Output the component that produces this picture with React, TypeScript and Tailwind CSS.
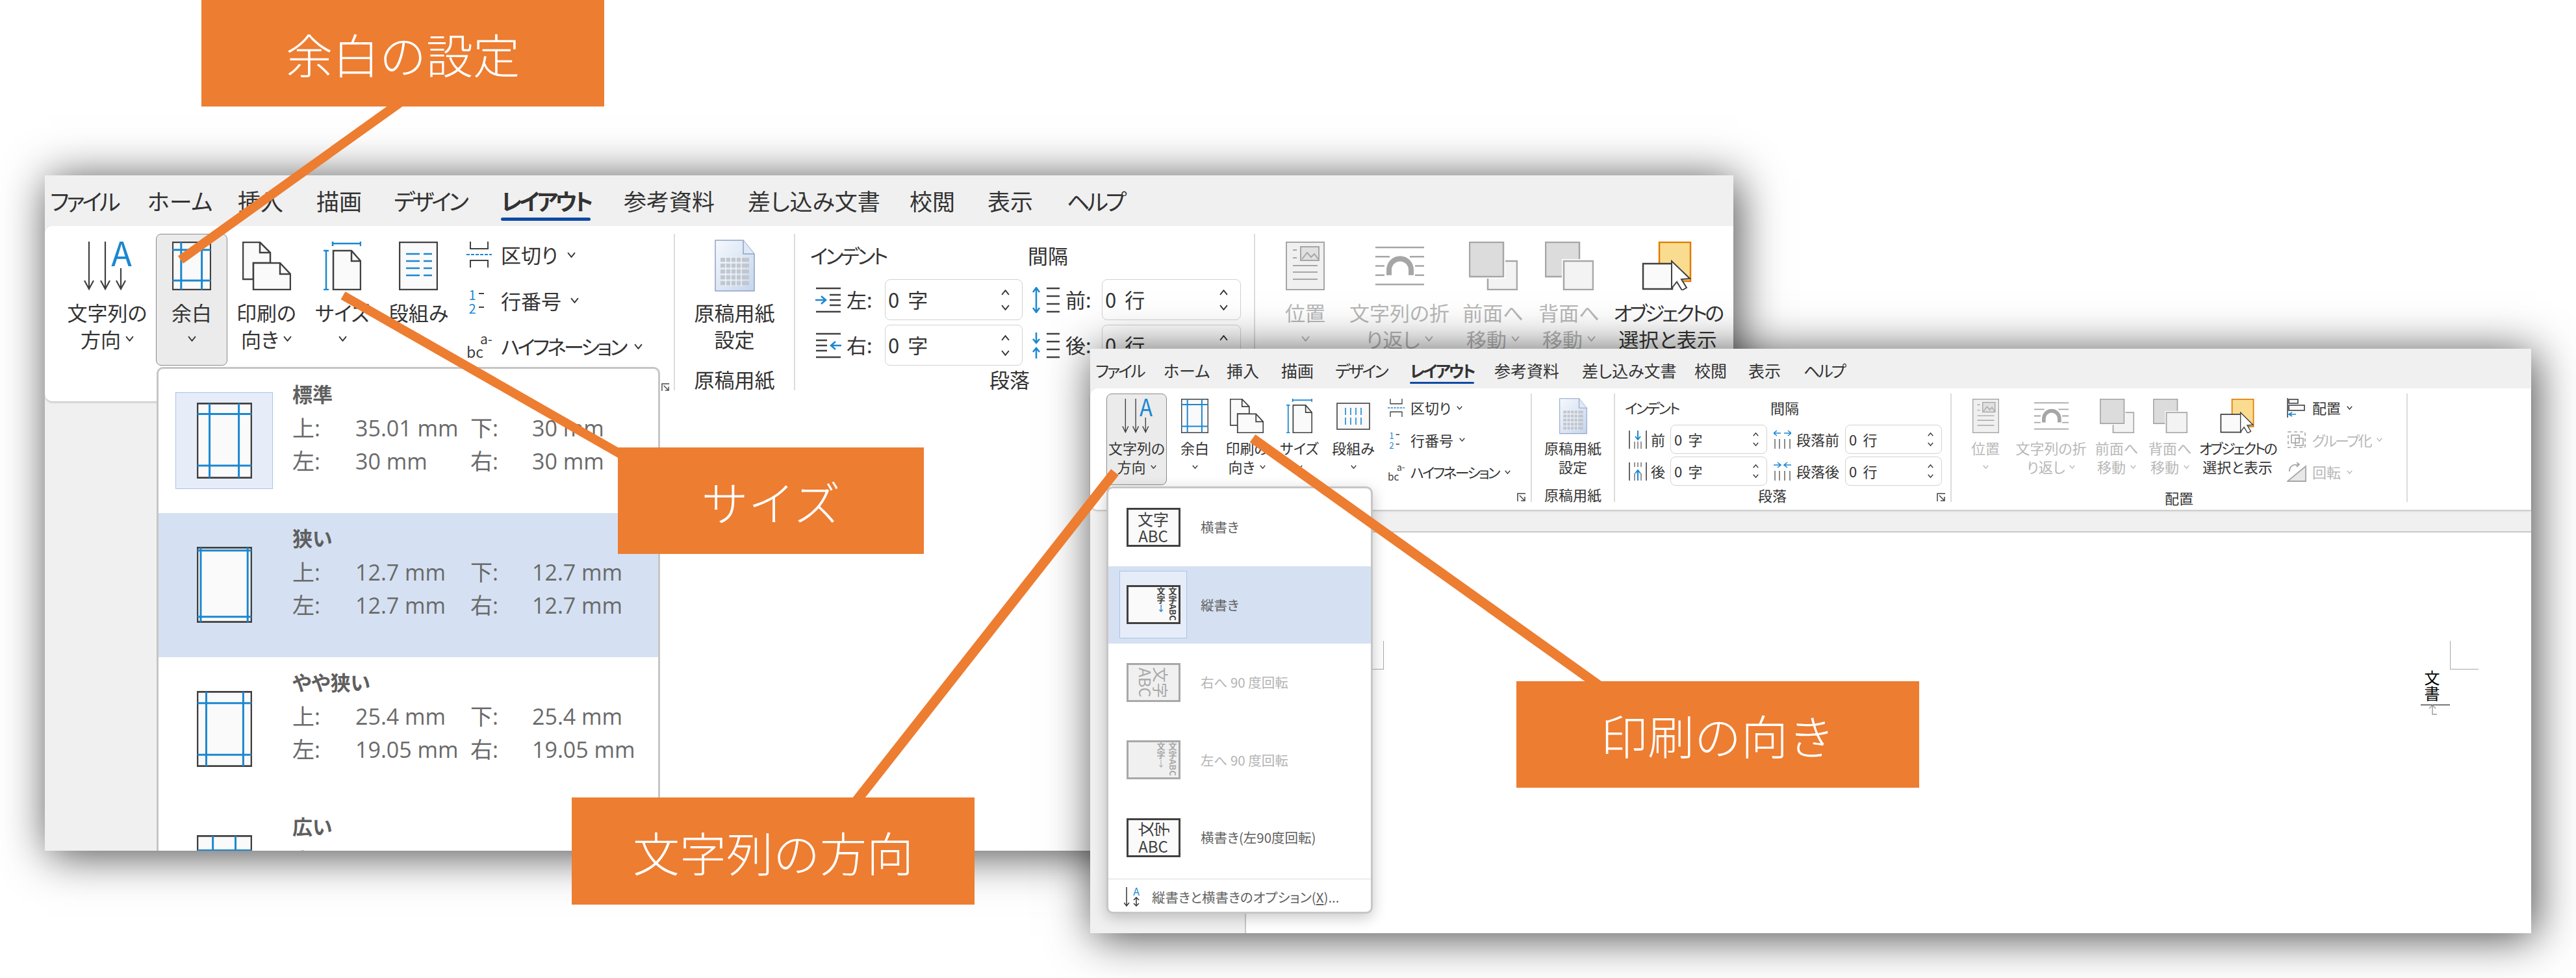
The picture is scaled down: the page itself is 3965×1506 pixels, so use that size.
import React from "react";

const BLUE = "#1b87d0";
const INK = "#404040";
const GREY = "#a6a6a6";

const tight = (s: string) => (/[ァ-ヶ]{2}/.test(s) && s !== "サイズ" ? "tracking-[-0.12em]" : "");

function Chev({ big, up }: { big?: boolean; up?: boolean }) {
  return (
    <svg viewBox="0 0 12 8" preserveAspectRatio="none" className={`shrink-0 ${big ? "w-[13px] h-[9px]" : "w-[9px] h-[6px]"}`} fill="none">
      <polyline points={up ? "1,7 6,1 11,7" : "1,1 6,7 11,1"} stroke="currentColor" strokeWidth="1.7" />
    </svg>
  );
}

function Launcher({ cls }: { cls: string }) {
  return (
    <svg viewBox="0 0 14 14" className={cls} fill="none" stroke="#444" strokeWidth="1.5">
      <path d="M13 1H1V13" />
      <path d="M4 4L12 12M12 6V12H6" />
    </svg>
  );
}

function DirIcon({ cls }: { cls: string }) {
  return (
    <svg viewBox="0 0 76 75" preserveAspectRatio="none" className={cls} fill="none" stroke={INK} strokeWidth="2.2">
      <path d="M10 0V73M3 60L10 73L17 60M35 0V73M28 60L35 73L42 60M59 41V73M52 60L59 73L66 60" />
      <text x="60" y="38" fontSize="52" textAnchor="middle" fill={BLUE} stroke="none">A</text>
    </svg>
  );
}

function OptIcon({ cls }: { cls: string }) {
  return (
    <svg viewBox="0 0 25 30" className={cls} fill="none" stroke={INK} strokeWidth="1.6">
      <path d="M4 0V29M0 24L4 29L8 24M19 16V29M15 20L19 16L23 20M15 25L19 29L23 25" />
      <text x="19" y="13" fontSize="16" textAnchor="middle" fill={BLUE} stroke="none">A</text>
    </svg>
  );
}

function MarginIcon({ cls, v, h, sw = 3 }: { cls: string; v: [number, number]; h: [number, number]; sw?: number }) {
  const line = { vectorEffect: "non-scaling-stroke" as const };
  return (
    <svg viewBox="0 0 100 100" preserveAspectRatio="none" className={cls} fill="none">
      <rect x="1" y="1" width="98" height="98" fill="#fafafa" stroke={INK} strokeWidth={sw} {...line} />
      <g stroke={BLUE} strokeWidth={sw}>
        <line x1={v[0]} x2={v[0]} y1="1" y2="99" {...line} />
        <line x1={v[1]} x2={v[1]} y1="1" y2="99" {...line} />
        <line y1={h[0]} y2={h[0]} x1="1" x2="99" {...line} />
        <line y1={h[1]} y2={h[1]} x1="1" x2="99" {...line} />
      </g>
    </svg>
  );
}

function PagesIcon({ cls }: { cls: string }) {
  return (
    <svg viewBox="0 0 75 75" preserveAspectRatio="none" className={cls} fill="none" stroke={INK} strokeWidth="2.5">
      <path d="M17 58H1V1H27L43 17V33H17Z" fill="#fafafa" />
      <path d="M27 1V17H43" />
      <path d="M17 33H58L74 50V74H17Z" fill="#fafafa" />
      <path d="M58 33V50H74" />
    </svg>
  );
}

function SizeIcon({ cls }: { cls: string }) {
  return (
    <svg viewBox="0 0 58 75" preserveAspectRatio="none" className={cls} fill="none" strokeWidth="2.5">
      <path d="M15 14H43L57 30V74H15Z" fill="#fafafa" stroke={INK} />
      <path d="M43 14V30H57" stroke={INK} />
      <path d="M14 3H57M14 0V7M57 0V7M4 14V74M0 14H8M0 74H8" stroke={BLUE} />
    </svg>
  );
}

function ColsBig({ cls }: { cls: string }) {
  return (
    <svg viewBox="0 0 60 75" preserveAspectRatio="none" className={cls} fill="none" strokeWidth="2.5">
      <rect x="1" y="1" width="58" height="73" fill="#fafafa" stroke={INK} />
      <path d="M11 19H32M38 19H51M11 30H32M38 30H51M11 41H32M38 41H51M11 52H32M38 52H51" stroke={BLUE} />
    </svg>
  );
}

function ColsSmall({ cls }: { cls: string }) {
  return (
    <svg viewBox="0 0 52 42" className={cls} fill="none" strokeWidth="1.6">
      <rect x="1" y="1" width="50" height="40" fill="#fafafa" stroke={INK} />
      <path d="M14 8V19M14 23V34M22 8V19M22 23V34M30 8V19M30 23V34M38 8V19M38 23V34" stroke={BLUE} />
    </svg>
  );
}

function BreakIcon({ cls }: { cls: string }) {
  return (
    <svg viewBox="0 0 39 40" preserveAspectRatio="none" className={cls} fill="none" strokeWidth="2">
      <path d="M6 0V11H33V0M6 40V29H33V40" stroke={INK} />
      <path d="M0 20H39" stroke={BLUE} strokeDasharray="5 2" />
    </svg>
  );
}

function LineNumIcon({ cls }: { cls: string }) {
  return (
    <svg viewBox="0 0 39 40" preserveAspectRatio="none" className={cls}>
      <text x="9" y="19" fontSize="20" textAnchor="middle" fill={BLUE}>1</text>
      <text x="9" y="40" fontSize="20" textAnchor="middle" fill={BLUE}>2</text>
      <path d="M19 9H27M19 30H27" stroke={INK} strokeWidth="2" />
    </svg>
  );
}

function HyphIcon({ cls }: { cls: string }) {
  return (
    <svg viewBox="0 0 39 40" preserveAspectRatio="none" className={cls}>
      <text x="21" y="17" fontSize="21" fill={INK}>a-</text>
      <text x="0" y="38" fontSize="23" fill={INK}>bc</text>
    </svg>
  );
}

function SheetIcon({ cls, id }: { cls: string; id: string }) {
  return (
    <svg viewBox="0 0 62 81" preserveAspectRatio="none" className={cls} fill="none">
      <defs>
        <linearGradient id={id} x1="0" y1="0" x2="1" y2="1">
          <stop offset="0" stopColor="#f6f9fd" />
          <stop offset="1" stopColor="#c6d5ec" />
        </linearGradient>
      </defs>
      <path d="M1 1H44L61 22V79H1Z" fill={`url(#${id})`} stroke="#8ea3c6" strokeWidth="1.5" />
      <path d="M44 1V22H61" fill="#dfe8f5" stroke="#8ea3c6" strokeWidth="1.5" />
      {[28, 37, 46, 55, 64].map((y) => (
        <rect key={y} x="9" y={y} width="44" height="6" fill="#c2c7ce" />
      ))}
      {[17, 25, 33, 41].map((x) => (
        <line key={x} x1={x} x2={x} y1="26" y2="72" stroke="#f1f4f8" strokeWidth="1.5" />
      ))}
    </svg>
  );
}

function PosIcon({ cls }: { cls: string }) {
  return (
    <svg viewBox="0 0 60 75" preserveAspectRatio="none" className={cls} fill="none" stroke={GREY} strokeWidth="2">
      <rect x="1" y="1" width="58" height="73" fill="#f0f0f0" />
      <rect x="23" y="8" width="28" height="21" fill="#e0e0e0" />
      <path d="M25 27L33 17L39 24L44 19L50 27" />
      <path d="M11 13H17M11 25H17M11 37H49M11 47H49M11 58H49" />
    </svg>
  );
}

function WrapIcon({ cls }: { cls: string }) {
  return (
    <svg viewBox="0 0 75 60" preserveAspectRatio="none" className={cls} fill="none" stroke={GREY} strokeWidth="2.5">
      <path d="M0 2H75M0 16H22M53 16H75M0 30H14M61 30H75M0 44H14M61 44H75M0 58H75" />
      <path d="M21 44V36A17 17 0 0 1 55 36V44" strokeWidth="8" />
    </svg>
  );
}

function OrderIcon({ cls, front }: { cls: string; front?: boolean }) {
  const big = <rect x="1" y="1" width="52" height="53" fill="#dcdcdc" stroke={GREY} strokeWidth="2.5" />;
  const small = <rect x="29" y="30" width="45" height="44" fill="#f3f3f3" stroke={GREY} strokeWidth="2.5" />;
  return (
    <svg viewBox="0 0 75 75" preserveAspectRatio="none" className={cls} fill="none">
      {front ? small : big}
      {front ? <rect x="0" y="0" width="56" height="57" fill="#fff" /> : <rect x="26" y="27" width="51" height="50" fill="#fff" />}
      {front ? big : small}
    </svg>
  );
}

function ObjIcon({ cls }: { cls: string }) {
  return (
    <svg viewBox="0 0 80 75" preserveAspectRatio="none" className={cls} fill="none">
      <rect x="27" y="1" width="48" height="60" fill="#f9dc8f" stroke="#e07b00" strokeWidth="2.5" />
      <rect x="2" y="34" width="45" height="39" fill="#fafafa" stroke={INK} strokeWidth="2.5" />
      <path d="M46 30L46 72L54 62L62 75L69 71L61 58L74 57Z" fill="#fff" stroke={INK} strokeWidth="2" />
    </svg>
  );
}

function IndentIcon({ cls, side }: { cls: string; side: "l" | "r" }) {
  return (
    <svg viewBox="0 0 40 40" preserveAspectRatio="none" className={cls} fill="none" strokeWidth="2.5">
      <path d="M1 2H39M1 38H39" stroke={INK} />
      {side === "l" ? (
        <>
          <path d="M22 12H39M22 20H39M22 28H39" stroke={INK} />
          <path d="M0 20H15M9 14L16 20L9 26" stroke={BLUE} />
        </>
      ) : (
        <>
          <path d="M1 12H18M1 20H18M1 28H18" stroke={INK} />
          <path d="M40 20H25M31 14L24 20L31 26" stroke={BLUE} />
        </>
      )}
    </svg>
  );
}

function SpaceIcon({ cls, after }: { cls: string; after?: boolean }) {
  return (
    <svg viewBox="0 0 45 40" preserveAspectRatio="none" className={cls} fill="none" strokeWidth="2.5">
      <path d="M24 2H44M24 14H44M24 26H44M24 38H44" stroke={INK} />
      {after ? (
        <path d="M8 0V15M3 10L8 16L13 10M8 40V25M3 30L8 24L13 30" stroke={BLUE} />
      ) : (
        <path d="M8 2V38M3 8L8 1L13 8M3 32L8 39L13 32" stroke={BLUE} />
      )}
    </svg>
  );
}

function ColIndentIcon({ cls, after }: { cls: string; after?: boolean }) {
  return (
    <svg viewBox="0 0 28 30" preserveAspectRatio="none" className={cls} fill="none" strokeWidth="1.6">
      <path d="M1 1V29M27 1V29" stroke={INK} />
      <path d="M9 18V29M14 18V29M19 18V29" stroke={INK} strokeWidth="1.1" />
      {after ? (
        <>
          <path d="M9 1V8M14 1V8M19 1V8" stroke={INK} strokeWidth="1.1" />
          <path d="M14 29V14M10 18L14 13L18 18" stroke={BLUE} strokeWidth="2" />
        </>
      ) : (
        <path d="M14 1V14M10 10L14 15L18 10" stroke={BLUE} strokeWidth="2" />
      )}
    </svg>
  );
}

function ParaIcon({ cls, after }: { cls: string; after?: boolean }) {
  return (
    <svg viewBox="0 0 27 30" preserveAspectRatio="none" className={cls} fill="none" strokeWidth="1.6">
      <path d="M2 14V29M9 14V29M17 14V29M25 14V29" stroke={INK} strokeWidth="1.2" />
      {after ? (
        <path d="M0 5H10M6 1L11 5L6 9M27 5H17M21 1L16 5L21 9" stroke={BLUE} />
      ) : (
        <path d="M11 5H1M5 1L0 5L5 9M16 5H26M22 1L27 5L22 9" stroke={BLUE} />
      )}
    </svg>
  );
}

function AlignIcon({ cls }: { cls: string }) {
  return (
    <svg viewBox="0 0 30 30" preserveAspectRatio="none" className={cls} fill="none" strokeWidth="1.6">
      <path d="M1 0V30" stroke={INK} />
      <rect x="3" y="2" width="14" height="6" stroke={INK} fill="#fafafa" />
      <rect x="3" y="11" width="24" height="8" stroke={INK} fill="#fafafa" />
      <path d="M14 25H4M8 22L3 25L8 28" stroke={BLUE} />
    </svg>
  );
}

function GroupIcon({ cls }: { cls: string }) {
  return (
    <svg viewBox="0 0 30 30" preserveAspectRatio="none" className={cls} fill="none" stroke={GREY} strokeWidth="1.6">
      <rect x="2" y="3" width="26" height="24" strokeDasharray="5 4" />
      <rect x="7" y="8" width="12" height="12" />
      <rect x="13" y="13" width="12" height="11" />
    </svg>
  );
}

function RotateIcon({ cls }: { cls: string }) {
  return (
    <svg viewBox="0 0 30 30" preserveAspectRatio="none" className={cls} fill="none" stroke={GREY} strokeWidth="1.8">
      <path d="M1 29L29 29L29 6Z" fill="#e8e8e8" />
      <path d="M4 14A9 9 0 0 1 15 4L19 3M15 0L19 3L15 7" />
    </svg>
  );
}

type ToolProps = {
  big?: boolean;
  w: string;
  icon: React.ReactNode;
  line1: string;
  line2?: string;
  disabled?: boolean;
  selected?: boolean;
  plain?: boolean;
};

function Tool({ big, w, icon, line1, line2, disabled, selected, plain }: ToolProps) {
  return (
    <div
      className={`flex flex-col items-center shrink-0 rounded-[8px] border whitespace-nowrap ${w} ${big ? "h-[203px] pt-[11px]" : "h-[141px] pt-[7px]"} ${selected ? "border-[#8a8a8a] bg-[#ebebeb]" : "border-transparent"} ${disabled ? "text-[#b8b8b8]" : "text-[#333333]"}`}
    >
      <div className={`flex items-center justify-center ${big ? "h-[75px]" : "h-[53px]"}`}>{icon}</div>
      <div className={`${tight(line1)} ${big ? "mt-[13px] text-[31px] leading-[41px]" : "mt-[8px] text-[22px] leading-[29px]"}`}>{line1}</div>
      <div className={`flex items-center gap-[7px] ${big ? "h-[41px] text-[31px] leading-[41px]" : "h-[29px] text-[22px] leading-[29px]"}`}>
        {line2 && <span>{line2}</span>}
        {!plain && <Chev big={big} />}
      </div>
    </div>
  );
}

function StackRow({ big, icon, label, disabled }: { big?: boolean; icon: React.ReactNode; label: string; disabled?: boolean }) {
  return (
    <div
      className={`flex items-center whitespace-nowrap ${big ? "h-[70.5px] gap-[14px] text-[31px]" : "h-[49.5px] gap-[9px] text-[22px]"} ${disabled ? "text-[#b8b8b8]" : "text-[#333333]"}`}
    >
      {icon}
      <span className={tight(label)}>{label}</span>
      <Chev big={big} />
    </div>
  );
}

function Spin({ big, value }: { big?: boolean; value: string }) {
  return (
    <div
      className={`flex items-center justify-between rounded-[8px] border border-[#d2d2d2] bg-white text-[#333333] ${big ? "h-[63px] pl-[4px] pr-[19px] text-[31px]" : "h-[45px] pl-[5px] pr-[12px] text-[22px]"}`}
    >
      <span className="[word-spacing:0.2em]">{value}</span>
      <div className={`flex flex-col ${big ? "gap-[14px]" : "gap-[9px]"}`}>
        <Chev big={big} up />
        <Chev big={big} />
      </div>
    </div>
  );
}

function Tabs({ big }: { big?: boolean }) {
  const tabs = big
    ? [
        ["ファイル", "w-[150px]"],
        ["ホーム", "w-[139px]"],
        ["挿入", "w-[121px]"],
        ["描画", "w-[119px]"],
        ["デザイン", "w-[165px]"],
        ["レイアウト", "w-[189px]"],
        ["参考資料", "w-[191px]"],
        ["差し込み文書", "w-[249px]"],
        ["校閲", "w-[120px]"],
        ["表示", "w-[122px]"],
        ["ヘルプ", "w-[100px]"],
      ]
    : [
        ["ファイル", "w-[105px]"],
        ["ホーム", "w-[97px]"],
        ["挿入", "w-[84px]"],
        ["描画", "w-[83px]"],
        ["デザイン", "w-[115px]"],
        ["レイアウト", "w-[130px]"],
        ["参考資料", "w-[135px]"],
        ["差し込み文書", "w-[173px]"],
        ["校閲", "w-[83px]"],
        ["表示", "w-[85px]"],
        ["ヘルプ", "w-[80px]"],
      ];
  return (
    <div className={`flex pl-[8px] bg-[#f0f0f0] text-[#333333] whitespace-nowrap ${big ? "h-[78px] pt-[19px] text-[35px] leading-[40px]" : "h-[61px] pt-[18px] text-[25px] leading-[30px]"}`}>
      {tabs.map(([label, w]) => (
        <div key={label} className={`${w} ${tight(label)}`}>
          {label === "レイアウト" ? (
            <div className="w-fit font-bold">
              {label}
              <div className={`rounded-full bg-[#0f4aa5] ${big ? "mt-[6px] h-[5px]" : "mt-[3px] h-[3px]"}`} />
            </div>
          ) : (
            label
          )}
        </div>
      ))}
    </div>
  );
}

function BigRibbon() {
  const s = { big: true };
  return (
    <div className="flex h-[270px] pt-[12px] bg-white rounded-l-[12px] shadow-[0_2px_3px_rgba(0,0,0,0.18)]">
      <div className="relative flex w-[970px] h-[241px] pl-[21px] border-r-2 border-[#dcdcdc]">
        <Tool {...s} w="w-[150px]" icon={<DirIcon cls="w-[76px] h-[75px]" />} line1="文字列の" line2="方向" />
        <Tool {...s} selected w="w-[110px]" icon={<MarginIcon cls="w-[60px] h-[75px]" v={[23, 76]} h={[17, 80]} />} line1="余白" />
        <Tool {...s} w="w-[120px]" icon={<PagesIcon cls="w-[75px] h-[75px]" />} line1="印刷の" line2="向き" />
        <Tool {...s} w="w-[114px]" icon={<SizeIcon cls="w-[58px] h-[75px]" />} line1="サイズ" />
        <Tool {...s} w="w-[120px]" icon={<ColsBig cls="w-[60px] h-[75px]" />} line1="段組み" />
        <div className="ml-[14px] -mt-[3px]">
          <StackRow {...s} icon={<BreakIcon cls="w-[39px] h-[40px]" />} label="区切り" />
          <StackRow {...s} icon={<LineNumIcon cls="w-[39px] h-[40px]" />} label="行番号" />
          <StackRow {...s} icon={<HyphIcon cls="w-[39px] h-[40px]" />} label="ハイフネーション" />
        </div>
        <Launcher cls="absolute right-[6px] bottom-[-2px] w-[13px] h-[13px]" />
      </div>
      <div className="flex flex-col items-center w-[185px] h-[241px] border-r-2 border-[#dcdcdc] text-[#333333]">
        <div className="h-[211px]">
          <Tool {...s} plain w="w-[180px]" icon={<SheetIcon id="sheet-big" cls="w-[62px] h-[81px]" />} line1="原稿用紙" line2="設定" />
        </div>
        <div className="text-[31px] leading-[41px]">原稿用紙</div>
      </div>
      <div className="flex flex-col w-[708px] h-[241px] border-r-2 border-[#dcdcdc] text-[#333333] text-[31px]">
        <div className="h-[211px] pt-[12px] pl-[23px]">
          <div className="flex leading-[41px]">
            <span className={`w-[335px] ${tight("インデント")}`}>インデント</span>
            <span>間隔</span>
          </div>
          <div className="mt-[17px] flex flex-col gap-[7px] pl-[8px]">
            <div className="flex items-center">
              <IndentIcon side="l" cls="w-[40px] h-[40px] mr-[8px]" />
              <span className="w-[59px]">左:</span>
              <div className="w-[212px]"><Spin big value="0 字" /></div>
              <SpaceIcon cls="ml-[13px] mr-[8px] w-[45px] h-[40px]" />
              <span className="w-[56px]">前:</span>
              <div className="w-[214px]"><Spin big value="0 行" /></div>
            </div>
            <div className="flex items-center">
              <IndentIcon side="r" cls="w-[40px] h-[40px] mr-[8px]" />
              <span className="w-[59px]">右:</span>
              <div className="w-[212px]"><Spin big value="0 字" /></div>
              <SpaceIcon after cls="ml-[13px] mr-[8px] w-[45px] h-[40px]" />
              <span className="w-[56px]">後:</span>
              <div className="w-[214px]"><Spin big value="0 行" /></div>
            </div>
          </div>
        </div>
        <div className="pr-[46px] text-center leading-[41px]">段落</div>
      </div>
      <div className="flex pl-[26px]">
        <Tool {...s} disabled w="w-[102px]" icon={<PosIcon cls="w-[60px] h-[75px]" />} line1="位置" />
        <Tool {...s} disabled w="w-[188px]" icon={<WrapIcon cls="w-[75px] h-[61px]" />} line1="文字列の折" line2="り返し" />
        <Tool {...s} disabled w="w-[100px]" icon={<OrderIcon front cls="w-[75px] h-[75px]" />} line1="前面へ" line2="移動" />
        <Tool {...s} disabled w="w-[134px]" icon={<OrderIcon cls="w-[75px] h-[75px]" />} line1="背面へ" line2="移動" />
        <Tool {...s} plain w="w-[170px]" icon={<ObjIcon cls="w-[80px] h-[75px]" />} line1="オブジェクトの" line2="選択と表示" />
      </div>
    </div>
  );
}

function SmallRibbon() {
  return (
    <div className="flex h-[187px] pt-[8px] bg-white rounded-l-[12px] shadow-[0_2px_3px_rgba(0,0,0,0.18)]">
      <div className="relative flex w-[680px] h-[167px] pl-[25px] border-r-2 border-[#dcdcdc]">
        <Tool selected w="w-[93px]" icon={<DirIcon cls="w-[48px] h-[53px]" />} line1="文字列の" line2="方向" />
        <Tool w="w-[86px]" icon={<MarginIcon sw={2} cls="w-[42px] h-[53px]" v={[23, 76]} h={[17, 80]} />} line1="余白" />
        <Tool w="w-[74px]" icon={<PagesIcon cls="w-[52px] h-[53px]" />} line1="印刷の" line2="向き" />
        <Tool w="w-[88px]" icon={<SizeIcon cls="w-[40px] h-[53px]" />} line1="サイズ" />
        <Tool w="w-[78px]" icon={<ColsSmall cls="w-[52px] h-[42px]" />} line1="段組み" />
        <div className="ml-[14px] -mt-[3px]">
          <StackRow icon={<BreakIcon cls="w-[26px] h-[28px]" />} label="区切り" />
          <StackRow icon={<LineNumIcon cls="w-[26px] h-[28px]" />} label="行番号" />
          <StackRow icon={<HyphIcon cls="w-[26px] h-[28px]" />} label="ハイフネーション" />
        </div>
        <Launcher cls="absolute right-[7px] bottom-[0px] w-[14px] h-[14px]" />
      </div>
      <div className="flex flex-col items-center w-[128px] h-[167px] border-r-2 border-[#dcdcdc] text-[#333333]">
        <div className="h-[146px]">
          <Tool plain w="w-[124px]" icon={<SheetIcon id="sheet-small" cls="w-[43px] h-[56px]" />} line1="原稿用紙" line2="設定" />
        </div>
        <div className="text-[22px] leading-[29px]">原稿用紙</div>
      </div>
      <div className="relative flex flex-col w-[518px] h-[167px] border-r-2 border-[#dcdcdc] text-[#333333] text-[22px]">
        <div className="h-[146px] pt-[7px] pl-[15px]">
          <div className="flex leading-[29px]">
            <span className={`w-[224px] ${tight("インデント")}`}>インデント</span>
            <span>間隔</span>
          </div>
          <div className="mt-[12px] flex flex-col gap-[4px] pl-[6px]">
            <div className="flex items-center">
              <ColIndentIcon cls="w-[28px] h-[30px] mr-[6px]" />
              <span className="w-[30px]">前</span>
              <div className="w-[149px]"><Spin value="0 字" /></div>
              <ParaIcon cls="ml-[10px] mr-[8px] w-[27px] h-[30px]" />
              <span className="w-[75px]">段落前</span>
              <div className="w-[149px]"><Spin value="0 行" /></div>
            </div>
            <div className="flex items-center">
              <ColIndentIcon after cls="w-[28px] h-[30px] mr-[6px]" />
              <span className="w-[30px]">後</span>
              <div className="w-[149px]"><Spin value="0 字" /></div>
              <ParaIcon after cls="ml-[10px] mr-[8px] w-[27px] h-[30px]" />
              <span className="w-[75px]">段落後</span>
              <div className="w-[149px]"><Spin value="0 行" /></div>
            </div>
          </div>
        </div>
        <div className="pr-[32px] text-center leading-[29px]">段落</div>
        <Launcher cls="absolute right-[7px] bottom-[0px] w-[14px] h-[14px]" />
      </div>
      <div className="flex flex-col w-[702px] h-[167px] border-r-2 border-[#dcdcdc]">
        <div className="flex h-[146px] pl-[8px]">
          <Tool disabled w="w-[88px]" icon={<PosIcon cls="w-[41px] h-[53px]" />} line1="位置" />
          <Tool disabled w="w-[114px]" icon={<WrapIcon cls="w-[53px] h-[43px]" />} line1="文字列の折" line2="り返し" />
          <Tool disabled w="w-[88px]" icon={<OrderIcon front cls="w-[53px] h-[53px]" />} line1="前面へ" line2="移動" />
          <Tool disabled w="w-[76px]" icon={<OrderIcon cls="w-[53px] h-[53px]" />} line1="背面へ" line2="移動" />
          <Tool plain w="w-[132px]" icon={<ObjIcon cls="w-[55px] h-[53px]" />} line1="オブジェクトの" line2="選択と表示" />
          <div className="ml-[10px] -mt-[3px]">
            <StackRow icon={<AlignIcon cls="w-[30px] h-[30px]" />} label="配置" />
            <StackRow disabled icon={<GroupIcon cls="w-[30px] h-[30px]" />} label="グループ化" />
            <StackRow disabled icon={<RotateIcon cls="w-[30px] h-[30px]" />} label="回転" />
          </div>
        </div>
        <div className="text-center text-[22px] leading-[29px] text-[#333333]">配置</div>
      </div>
    </div>
  );
}

const marginItems: {
  name: string;
  top: string;
  bottom: string;
  left: string;
  right: string;
  v: [number, number];
  h: [number, number];
  thumb?: boolean;
  hot?: boolean;
}[] = [
  { name: "標準", top: "35.01 mm", bottom: "30 mm", left: "30 mm", right: "30 mm", v: [23, 76], h: [15, 83], thumb: true },
  { name: "狭い", top: "12.7 mm", bottom: "12.7 mm", left: "12.7 mm", right: "12.7 mm", v: [7, 92], h: [5, 92], hot: true },
  { name: "やや狭い", top: "25.4 mm", bottom: "25.4 mm", left: "19.05 mm", right: "19.05 mm", v: [17, 84], h: [16, 84] },
  { name: "広い", top: "50.8 mm", bottom: "50.8 mm", left: "50.8 mm", right: "50.8 mm", v: [29, 70], h: [20, 80] },
];

function MarginMenu() {
  return (
    <div className="absolute left-[172px] top-[295px] w-[775px] h-[760px] rounded-[10px] border-[3px] border-[#c6c6c6] bg-white overflow-hidden">
      {marginItems.map((m) => (
        <div key={m.name} className={`flex h-[222px] pl-[26px] ${m.hot ? "bg-[#d5e1f2]" : ""}`}>
          <div className={`mt-[36px] w-[150px] h-[149px] shrink-0 flex items-center justify-center border ${m.thumb ? "bg-[#e6edf9] border-[#a9c3e8]" : "border-transparent"}`}>
            <MarginIcon cls="w-[85px] h-[117px]" v={m.v} h={m.h} />
          </div>
          <div className="ml-[30px] pt-[18px] text-[#6a6a6a]">
            <div className="text-[31px] leading-[40px] font-bold text-[#5f5f5f]">{m.name}</div>
            <div className="mt-[8px] grid grid-cols-[97px_177px_95px_170px] text-[34px] leading-[51px] font-['Open_Sans','Noto_Sans_CJK_JP',sans-serif] whitespace-nowrap">
              <span>上:</span><span>{m.top}</span><span>下:</span><span>{m.bottom}</span>
              <span>左:</span><span>{m.left}</span><span>右:</span><span>{m.right}</span>
            </div>
          </div>
        </div>
      ))}
    </div>
  );
}

function TextThumb({ kind, dim }: { kind: "h" | "v" | "r" | "l"; dim?: boolean }) {
  const tone = dim ? "border-[#a8a8a8] bg-[#f0f0f0] text-[#a8a8a8]" : "border-[#404040] bg-[#fafafa] text-[#404040]";
  return (
    <div className={`w-[83px] h-[60px] shrink-0 border-[3px] overflow-hidden ${tone}`}>
      {kind === "h" && (
        <div className="flex flex-col items-center text-[24px] leading-[26px] pt-[1px]">
          <span>文字</span>
          <span>ABC</span>
        </div>
      )}
      {kind === "v" && (
        <div className="flex justify-end items-start gap-[5px] pr-[2px] text-[13px] leading-[13px] font-bold whitespace-nowrap [font-feature-settings:normal]">
          <span className="shrink-0 [writing-mode:vertical-rl]">
            文字<span className={`[text-orientation:upright] ${dim ? "font-normal" : "text-[#1b87d0]"}`}>↓</span>
          </span>
          <span className="shrink-0 [writing-mode:vertical-rl]">文字ABC</span>
        </div>
      )}
      {kind === "r" && (
        <div className="flex items-center justify-center h-full">
          <div className="rotate-90 flex flex-col items-center shrink-0 text-[24px] leading-[24px]">
            <span>文字</span>
            <span>ABC</span>
          </div>
        </div>
      )}
      {kind === "l" && (
        <div className="flex flex-col items-center text-[24px] leading-[26px] pt-[1px]">
          <span className="flex">
            <span className="-rotate-90">文</span>
            <span className="-rotate-90">字</span>
          </span>
          <span>ABC</span>
        </div>
      )}
    </div>
  );
}

function DirMenu() {
  const items: { label: string; kind: "h" | "v" | "r" | "l"; dim?: boolean; hot?: boolean }[] = [
    { label: "横書き", kind: "h" },
    { label: "縦書き", kind: "v", hot: true },
    { label: "右へ 90 度回転", kind: "r", dim: true },
    { label: "左へ 90 度回転", kind: "v", dim: true },
    { label: "横書き(左90度回転)", kind: "l" },
  ];
  return (
    <div className="absolute left-[25px] top-[212px] w-[410px] h-[658px] rounded-[10px] border-[3px] border-[#c6c6c6] bg-white overflow-hidden shadow-[0_6px_22px_rgba(0,0,0,0.22)]">
      {items.map((it) => (
        <div key={it.label} className={`flex items-center h-[119.5px] pl-[17px] ${it.hot ? "bg-[#d5e1f2]" : ""}`}>
          <div className={`w-[104px] h-[104px] flex items-center justify-center border ${it.hot ? "bg-[#e6edf9] border-[#a9c3e8]" : "border-transparent"}`}>
            <TextThumb kind={it.kind} dim={it.dim} />
          </div>
          <span className={`ml-[21px] text-[20.5px] whitespace-nowrap ${it.dim ? "text-[#b4b4b4]" : "text-[#5f5f5f]"}`}>{it.label}</span>
        </div>
      ))}
      <div className="flex items-center h-[56px] mt-[3px] pl-[24px] border-t border-[#dcdcdc] text-[20.5px] text-[#5f5f5f] whitespace-nowrap">
        <OptIcon cls="w-[25px] h-[30px]" />
        <span className="ml-[18px]">
          縦書きと横書きのオプション(<span className="underline">X</span>)...
        </span>
      </div>
    </div>
  );
}

function Callout({ cls, label }: { cls: string; label: string }) {
  return <div className={`absolute flex items-center justify-center bg-[#ed7d31] text-white text-[72px] font-light [font-feature-settings:normal] ${cls}`}>{label}</div>;
}

export default function App() {
  return (
    <div className="relative w-[3965px] h-[1506px] overflow-hidden bg-white font-['Noto_Sans_CJK_JP','Noto_Sans',sans-serif] [font-feature-settings:'palt']">
      <div className="absolute left-[69px] top-[270px] w-[2599px] h-[1040px] flex flex-col overflow-hidden bg-[#f0f0f0] shadow-[6px_6px_65px_rgba(0,0,0,0.72)]">
        <Tabs big />
        <BigRibbon />
        <div className="flex-1 pl-[400px]">
          <div className="h-full bg-white" />
        </div>
        <MarginMenu />
      </div>

      <div className="absolute left-[1678px] top-[537px] w-[2218px] h-[900px] flex flex-col bg-[#f0f0f0] shadow-[6px_6px_65px_rgba(0,0,0,0.72)]">
        <Tabs />
        <SmallRibbon />
        <div className="flex-1 pt-[33px] pl-[238px]">
          <div className="relative h-full bg-white border-l-2 border-t-2 border-[#c8c8c8]">
            <div className="absolute left-[194px] top-[167px] w-[18px] h-[44px] border-r border-b border-[#a8a8a8]" />
            <div className="absolute left-[1853px] top-[167px] w-[44px] h-[44px] border-l border-b border-[#a8a8a8]" />
            <div className="absolute left-[1813px] top-[212px] text-[24px] leading-[24px] text-black [writing-mode:vertical-rl]">
              文書
            </div>
            <div className="absolute left-[1808px] top-[265px] w-[45px] h-[1px] bg-black" />
            <svg viewBox="0 0 14 16" className="absolute left-[1820px] top-[265px] w-[14px] h-[16px]" fill="none" stroke="#9a9a9a" strokeWidth="1.4">
              <path d="M13 15H6V1M1 6L6 1L11 6" />
            </svg>
          </div>
        </div>
        <DirMenu />
      </div>

      <svg className="absolute inset-0 w-full h-full pointer-events-none" viewBox="0 0 3965 1506" fill="none" stroke="#ed7d31">
        <line x1="620" y1="155" x2="278" y2="400" strokeWidth="14" />
        <line x1="528" y1="455" x2="960" y2="702" strokeWidth="14" />
        <line x1="1316" y1="1236" x2="1716" y2="727" strokeWidth="15" />
        <line x1="1928" y1="675" x2="2462" y2="1056" strokeWidth="15" />
      </svg>

      <Callout cls="left-[310px] top-0 w-[620px] h-[164px]" label="余白の設定" />
      <Callout cls="left-[951px] top-[689px] w-[471px] h-[164px]" label="サイズ" />
      <Callout cls="left-[880px] top-[1228px] w-[620px] h-[165px]" label="文字列の方向" />
      <Callout cls="left-[2334px] top-[1049px] w-[620px] h-[164px]" label="印刷の向き" />
    </div>
  );
}
